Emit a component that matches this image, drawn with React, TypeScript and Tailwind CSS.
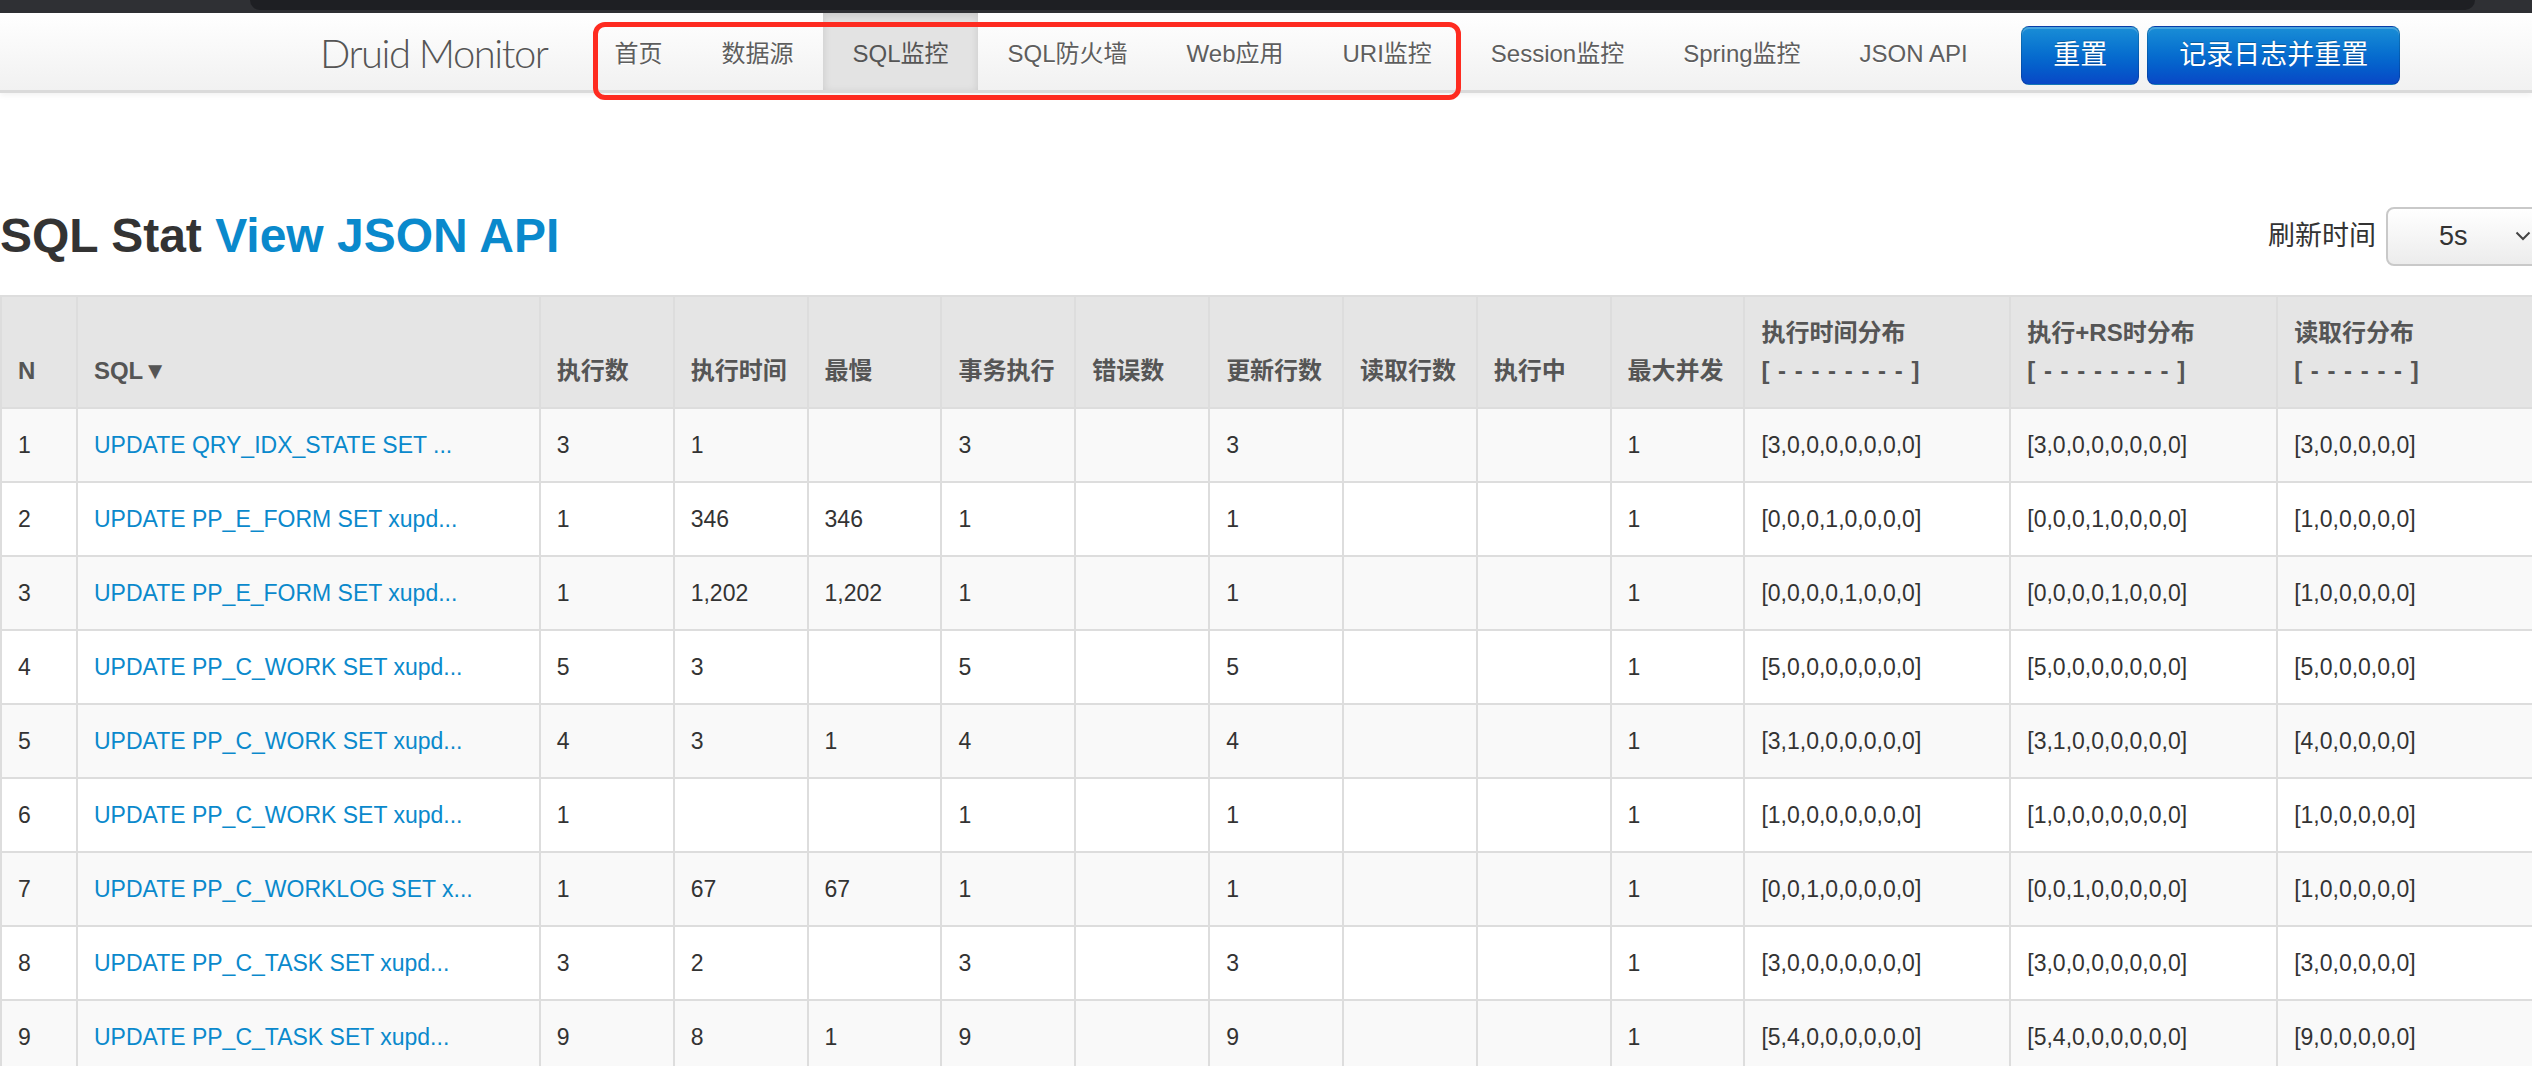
import React from "react";

const NAV_ITEMS = [
  "首页",
  "数据源",
  "SQL监控",
  "SQL防火墙",
  "Web应用",
  "URI监控",
  "Session监控",
  "Spring监控",
  "JSON API",
];

const COLUMNS: { label: React.ReactNode; w: string }[] = [
  { label: "N", w: "w-[76px]" },
  { label: "SQL▼", w: "w-[463px]" },
  { label: "执行数", w: "w-[134px]" },
  { label: "执行时间", w: "w-[134px]" },
  { label: "最慢", w: "w-[134px]" },
  { label: "事务执行", w: "w-[134px]" },
  { label: "错误数", w: "w-[134px]" },
  { label: "更新行数", w: "w-[134px]" },
  { label: "读取行数", w: "w-[134px]" },
  { label: "执行中", w: "w-[134px]" },
  { label: "最大并发", w: "w-[134px]" },
  {
    label: (
      <>
        执行时间分布
        <br />
        <span className="tracking-[1px]">[ - - - - - - - - ]</span>
      </>
    ),
    w: "w-[266px]",
  },
  {
    label: (
      <>
        执行+RS时分布
        <br />
        <span className="tracking-[1px]">[ - - - - - - - - ]</span>
      </>
    ),
    w: "w-[267px]",
  },
  {
    label: (
      <>
        读取行分布
        <br />
        <span className="tracking-[1px]">[ - - - - - - ]</span>
      </>
    ),
    w: "w-[271px]",
  },
];

// N, SQL, then counters, then the three histograms
const ROWS: string[][] = [
  ["1", "UPDATE QRY_IDX_STATE SET ...", "3", "1", "", "3", "", "3", "", "", "1", "[3,0,0,0,0,0,0,0]", "[3,0,0,0,0,0,0,0]", "[3,0,0,0,0,0]"],
  ["2", "UPDATE PP_E_FORM SET xupd...", "1", "346", "346", "1", "", "1", "", "", "1", "[0,0,0,1,0,0,0,0]", "[0,0,0,1,0,0,0,0]", "[1,0,0,0,0,0]"],
  ["3", "UPDATE PP_E_FORM SET xupd...", "1", "1,202", "1,202", "1", "", "1", "", "", "1", "[0,0,0,0,1,0,0,0]", "[0,0,0,0,1,0,0,0]", "[1,0,0,0,0,0]"],
  ["4", "UPDATE PP_C_WORK SET xupd...", "5", "3", "", "5", "", "5", "", "", "1", "[5,0,0,0,0,0,0,0]", "[5,0,0,0,0,0,0,0]", "[5,0,0,0,0,0]"],
  ["5", "UPDATE PP_C_WORK SET xupd...", "4", "3", "1", "4", "", "4", "", "", "1", "[3,1,0,0,0,0,0,0]", "[3,1,0,0,0,0,0,0]", "[4,0,0,0,0,0]"],
  ["6", "UPDATE PP_C_WORK SET xupd...", "1", "", "", "1", "", "1", "", "", "1", "[1,0,0,0,0,0,0,0]", "[1,0,0,0,0,0,0,0]", "[1,0,0,0,0,0]"],
  ["7", "UPDATE PP_C_WORKLOG SET x...", "1", "67", "67", "1", "", "1", "", "", "1", "[0,0,1,0,0,0,0,0]", "[0,0,1,0,0,0,0,0]", "[1,0,0,0,0,0]"],
  ["8", "UPDATE PP_C_TASK SET xupd...", "3", "2", "", "3", "", "3", "", "", "1", "[3,0,0,0,0,0,0,0]", "[3,0,0,0,0,0,0,0]", "[3,0,0,0,0,0]"],
  ["9", "UPDATE PP_C_TASK SET xupd...", "9", "8", "1", "9", "", "9", "", "", "1", "[5,4,0,0,0,0,0,0]", "[5,4,0,0,0,0,0,0]", "[9,0,0,0,0,0]"],
];

const Navbar: React.FC = () => {
  return (
    <div className="relative">
      <div className="h-[13px] bg-[#2f3034]">
        <div className="ml-[250px] h-[10px] w-[2225px] rounded-b-[12px] bg-[#1e1f23]" />
      </div>
      <div className="flex h-[80px] items-stretch border-b-[3px] border-[#dadada] bg-linear-to-b from-white to-[#f1f1f1] shadow-[0_2px_6px_rgba(0,0,0,0.06)]">
        <div className="flex w-[585px] items-center pl-[320px] pt-[3px]">
          <span className="font-['Lato',sans-serif] text-[40px] font-light tracking-[-1.5px] text-[#555]">
            Druid Monitor
          </span>
        </div>
        <ul className="flex items-stretch">
          {NAV_ITEMS.map((item) => (
            <li
              key={item}
              className={
                item === "SQL监控"
                  ? "flex items-center bg-[#e3e3e3] px-[29.5px] pt-[5px] text-[24px] text-[#555] shadow-[inset_0_3px_8px_rgba(0,0,0,0.12)]"
                  : "flex items-center px-[29.5px] pt-[5px] text-[24px] text-[#5e5e5e] [text-shadow:0_1px_0_#fff]"
              }
            >
              {item}
            </li>
          ))}
        </ul>
        <div className="ml-[24px] mt-[8px] flex items-center gap-[8px]">
          <button className="h-[59px] rounded-[8px] border border-[rgba(0,0,0,0.15)] bg-linear-to-b from-[#1a8ed6] to-[#0a47c6] px-[31px] text-[27px] text-white shadow-[inset_0_2px_0_rgba(255,255,255,0.2)] [text-shadow:0_-1px_0_rgba(0,0,0,0.25)]">
            重置
          </button>
          <button className="h-[59px] rounded-[8px] border border-[rgba(0,0,0,0.15)] bg-linear-to-b from-[#1a8ed6] to-[#0a47c6] px-[31px] text-[27px] text-white shadow-[inset_0_2px_0_rgba(255,255,255,0.2)] [text-shadow:0_-1px_0_rgba(0,0,0,0.25)]">
            记录日志并重置
          </button>
        </div>
      </div>
      {/* annotation box drawn over the first nav items */}
      <div className="pointer-events-none absolute left-[593px] top-[22px] h-[78px] w-[868px] rounded-[12px] border-[5px] border-[#fe2b20]" />
    </div>
  );
};

const App: React.FC = () => {
  return (
    <div className="h-[1066px] w-[2532px] overflow-hidden bg-white font-['Liberation_Sans','Noto_Sans_CJK_SC',sans-serif] text-[#333]">
      <Navbar />
      <div className="w-[2549px] pt-[113px]">
        <div className="flex h-[60px] items-center justify-between">
          <h1 className="text-[48px] font-bold leading-[56px] text-[#333]">
            SQL Stat <span className="text-[#0a89cc]">View JSON API</span>
          </h1>
          <div className="flex items-center">
            <span className="mr-[10px] text-[27px] text-[#333]">刷新时间</span>
            <div className="flex h-[59px] w-[163px] items-center justify-between rounded-[8px] border-2 border-[#c9c9c9] bg-linear-to-b from-white to-[#ececec] pl-[51px] pr-[16px]">
              <span className="text-[27px] text-[#333]">5s</span>
              <svg width="16" height="10" viewBox="0 0 16 10" fill="none">
                <path d="M1.5 1.5 L8 8 L14.5 1.5" stroke="#444" strokeWidth="2" />
              </svg>
            </div>
          </div>
        </div>
        <table className="mt-[29px] table-fixed border-collapse">
          <colgroup>
            {COLUMNS.map((c, i) => (
              <col key={i} className={c.w} />
            ))}
          </colgroup>
          <thead>
            <tr>
              {COLUMNS.map((c, i) => (
                <th
                  key={i}
                  className="h-[110px] border-2 border-[#dddddd] bg-[#e5e5e5] px-[16px] pb-[17px] pt-[17px] text-left align-bottom text-[24px] font-bold leading-[38px] text-[#555]"
                >
                  {c.label}
                </th>
              ))}
            </tr>
          </thead>
          <tbody>
            {ROWS.map((row, r) => (
              <tr key={r} className={r % 2 === 0 ? "bg-[#f9f9f9]" : "bg-white"}>
                {row.map((cell, i) => (
                  <td
                    key={i}
                    className="h-[74px] whitespace-nowrap border-2 border-[#dddddd] px-[16px] align-middle text-[23px] leading-[30px]"
                  >
                    {i === 1 ? <a className="text-[#0a89cc]">{cell}</a> : cell}
                  </td>
                ))}
              </tr>
            ))}
          </tbody>
        </table>
      </div>
    </div>
  );
};

export default App;
